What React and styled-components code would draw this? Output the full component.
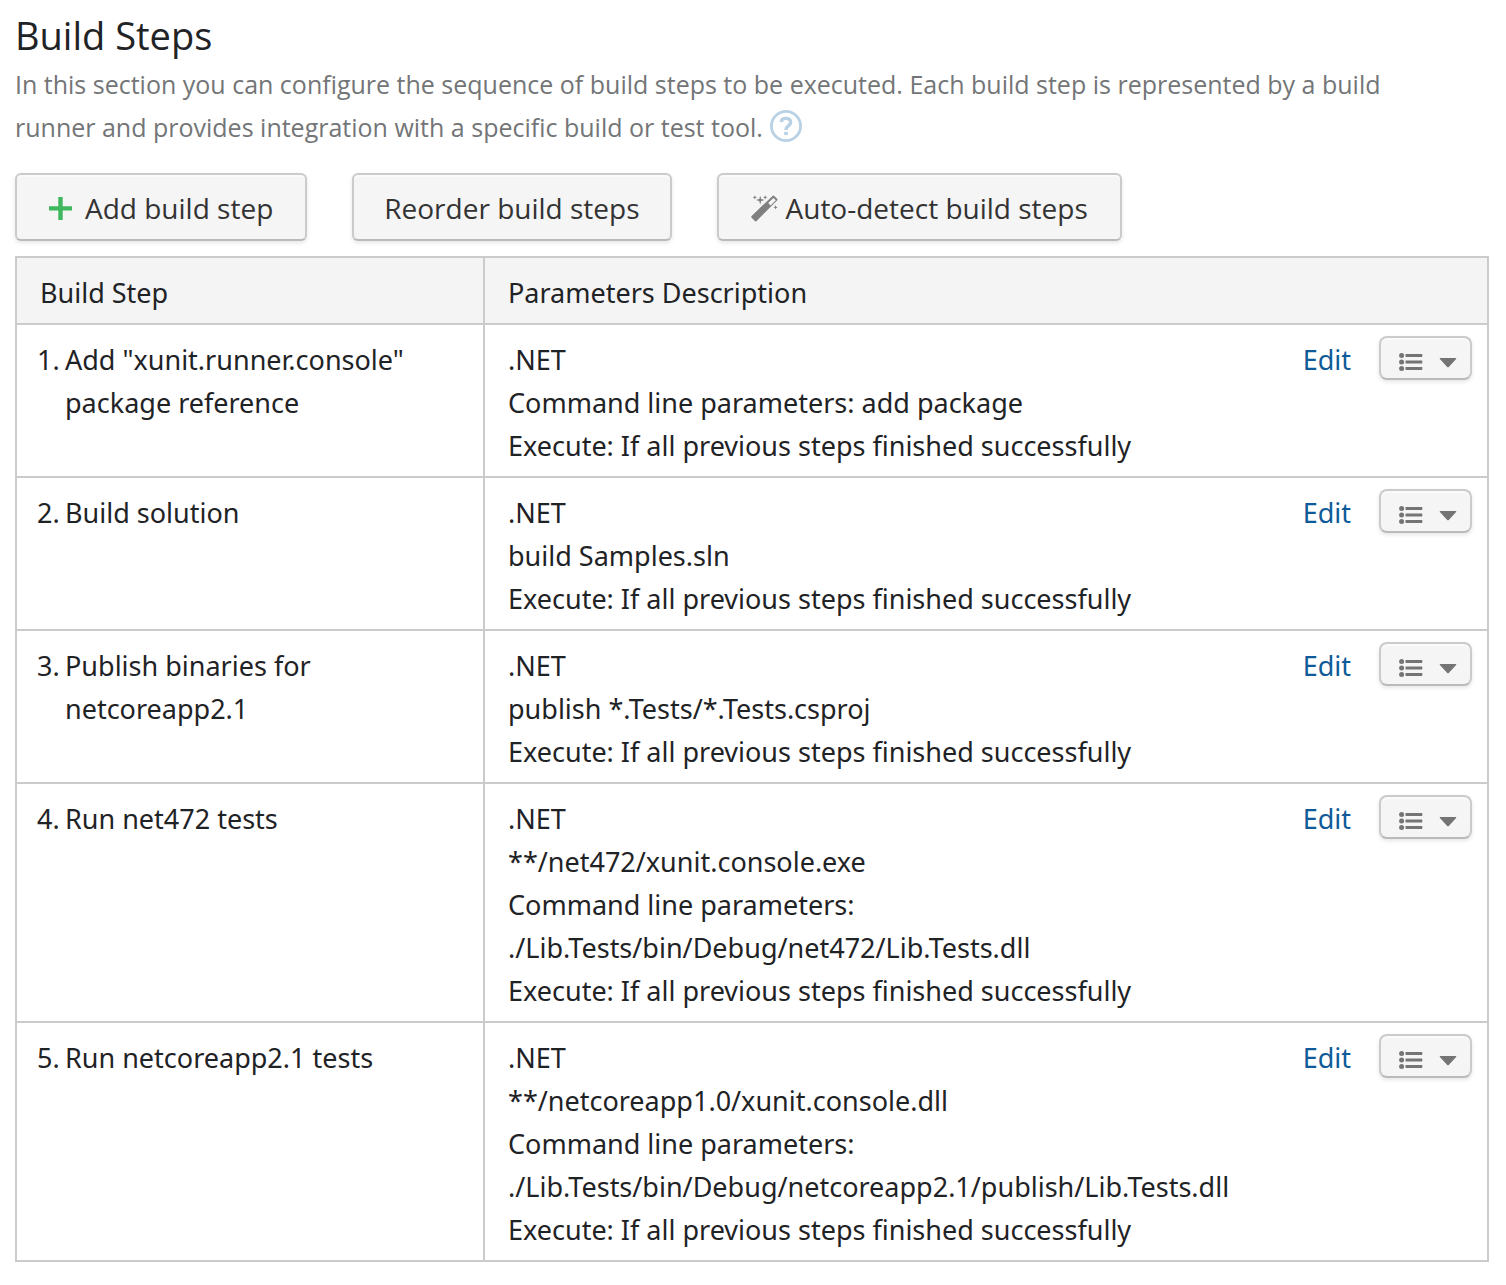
import React from "react";
import styled, { createGlobalStyle } from "styled-components";

const GlobalStyle = createGlobalStyle`
  * { box-sizing: border-box; }
  body {
    margin: 0;
    background: #fff;
    color: #1f2326;
    font-family: "Noto Sans", "Open Sans", sans-serif;
    font-size: 27px;
    line-height: 43px;
  }
`;

const Page = styled.main`
  padding: 8px 17px 22px 15px;
`;

const Title = styled.h1`
  margin: 0 0 1px;
  font-family: "Open Sans", "Noto Sans", sans-serif;
  font-size: 38px;
  font-weight: 400;
  line-height: 54px;
`;

const Intro = styled.p`
  margin: 0;
  padding-right: 48px;
  color: #737577;
  font-family: "Open Sans", "Noto Sans", sans-serif;
  font-size: 25px;
`;

const HelpLink = styled.a`
  display: inline-block;
  height: 32px;
  margin-left: 1px;
  line-height: 0;
  vertical-align: -5px;
`;

const Toolbar = styled.div`
  display: flex;
  gap: 45px;
  margin: 24px 0 15px;
`;

const Button = styled.button`
  display: inline-flex;
  align-items: center;
  justify-content: center;
  gap: ${(p) => p.$gap || 0}px;
  height: 68px;
  padding: 2px ${(p) => (p.$gap ? 32 : 30)}px 0;
  border: 2px solid #cbcbcb;
  border-bottom-color: #bababa;
  border-radius: 6px;
  background: #f5f5f5;
  box-shadow: 0 2px 4px rgba(0, 0, 0, 0.1), inset 0 2px 0 #fafafa;
  color: #333;
  font: 400 28px/43px "Open Sans", "Noto Sans", sans-serif;
  white-space: nowrap;
  cursor: pointer;
`;

const MenuButton = styled(Button)`
  height: 44px;
  padding: 8px 13px 0 18px;
  border-radius: 8px;
`;

const Table = styled.table`
  width: 100%;
  border: 2px solid #cbcbcb;
  border-collapse: collapse;
  table-layout: fixed;
`;

const NameCol = styled.col`
  width: 468px;
`;

const ActionsCol = styled.col`
  width: 210px;
`;

const HeadCell = styled.th`
  padding: 13px 23px 9px;
  border: 2px solid #cbcbcb;
  background: #f4f4f4;
  font-weight: 400;
  text-align: left;
`;

const Row = styled.tr`
  border-top: 2px solid #cbcbcb;
`;

const NameCell = styled.td`
  padding: 13px 20px 9px;
  border-right: 2px solid #cbcbcb;
  vertical-align: top;
`;

const StepName = styled.div`
  display: grid;
  grid-template-columns: 28px 1fr;
`;

const ParamsCell = styled.td`
  padding: 13px 0 9px 23px;
  vertical-align: top;
`;

const ActionsCell = styled.td`
  padding: 11px 15px 0 0;
  vertical-align: top;
`;

const Actions = styled.div`
  display: flex;
  justify-content: flex-end;
  align-items: flex-start;
  gap: 28px;
`;

const EditLink = styled.a`
  padding-top: 2px;
  color: #0f5b99;
  text-decoration: none;
`;

const steps = [
  { name: 'Add "xunit.runner.console" package reference', params: ["Command line parameters: add package"] },
  { name: "Build solution", params: ["build Samples.sln"] },
  { name: "Publish binaries for netcoreapp2.1", params: ["publish *.Tests/*.Tests.csproj"] },
  {
    name: "Run net472 tests",
    params: ["**/net472/xunit.console.exe", "Command line parameters:", "./Lib.Tests/bin/Debug/net472/Lib.Tests.dll"],
  },
  {
    name: "Run netcoreapp2.1 tests",
    params: [
      "**/netcoreapp1.0/xunit.console.dll",
      "Command line parameters:",
      "./Lib.Tests/bin/Debug/netcoreapp2.1/publish/Lib.Tests.dll",
    ],
  },
];

const HelpIcon = () => (
  <svg width="32" height="32" viewBox="0 0 32 32" fill="none" stroke="#b8d1e5" aria-hidden="true">
    <circle cx="16" cy="16" r="14.6" strokeWidth="2.8" />
    <path d="M11.200 12.200C11.400 9.800 13.300 8.400 16 8.400c2.800 0 4.700 1.500 4.700 3.800 0 3.500-4.700 3.700-4.700 7.200v.6" strokeWidth="3.400" />
    <path d="M14.200 21.800h3.700v3.300h-3.700z" fill="#b8d1e5" stroke="none" />
  </svg>
);

const PlusIcon = () => (
  <svg width="23" height="23" viewBox="0 0 23 23" fill="#3fb75f" aria-hidden="true">
    <path d="M9.300 0h4.400v9.200H23v4.400h-9.300V23H9.300v-9.400H0V9.200h9.300z" />
  </svg>
);

const WandIcon = () => (
  <svg width="27" height="27" viewBox="0 0 27 27" fill="#808080" aria-hidden="true">
    <path
      fillRule="evenodd"
      d="M21.5.9a1.2 1.2 0 0 1 1.7 0l2.9 2.9a1.2 1.2 0 0 1 0 1.7L5.6 26a1.2 1.2 0 0 1-1.7 0L.6 22.7a1.2 1.2 0 0 1 0-1.7zM22.400 2.900l-5.200 5.200 2.400 2.400 5.200-5.200z"
    />
    <path d="M9.200.8l1 3.200 3.400 1-3.400 1-1 3.400-1-3.400-3.300-1 3.300-1zM3.800.2l.6 1.500 1.700.6-1.700.6-.6 1.700-.6-1.700-1.600-.6 1.600-.6zM14.200.2l.6 1.500 1.700.6-1.700.6-.6 1.700-.6-1.700-1.600-.6 1.600-.6zM24.600 10l.6 1.700 1.600.6-1.600.6-.6 1.600-.6-1.600-1.700-.6 1.700-.6z" />
  </svg>
);

const ListIcon = () => (
  <svg width="24" height="18" viewBox="0 0 24 18" fill="#747474" aria-hidden="true">
    {[2.5, 9, 15.5].map((y) => (
      <g key={y}>
        <circle cx="2.6" cy={y} r="2.5" />
        <rect x="6.5" y={y - 1.5} width="16.8" height="3" rx=".4" />
      </g>
    ))}
  </svg>
);

const CaretIcon = () => (
  <svg width="18" height="18" viewBox="0 0 18 18" fill="#747474" aria-hidden="true">
    <path d="M1.300 5h15.400q1.100 0 .4.900l-7.300 8q-.8.800-1.600 0l-7.300-8q-.7-.9.400-.9z" />
  </svg>
);

export default function App() {
  return (
    <>
      <GlobalStyle />
      <Page>
        <Title>Build Steps</Title>
        <Intro>
          In this section you can configure the sequence of build steps to be executed. Each build step is represented
          by a build runner and provides integration with a specific build or test tool.{" "}
          <HelpLink href="#help" aria-label="Help">
            <HelpIcon />
          </HelpLink>
        </Intro>
        <Toolbar>
          <Button type="button" $gap={13}>
            <PlusIcon />
            Add build step
          </Button>
          <Button type="button">Reorder build steps</Button>
          <Button type="button" $gap={8}>
            <WandIcon />
            Auto-detect build steps
          </Button>
        </Toolbar>
        <Table>
          <colgroup>
            <NameCol />
            <col />
            <ActionsCol />
          </colgroup>
          <thead>
            <tr>
              <HeadCell scope="col">Build Step</HeadCell>
              <HeadCell scope="col" colSpan={2}>
                Parameters Description
              </HeadCell>
            </tr>
          </thead>
          <tbody>
            {steps.map((step, i) => (
              <Row key={step.name}>
                <NameCell>
                  <StepName>
                    <span>{i + 1}.</span>
                    <span>{step.name}</span>
                  </StepName>
                </NameCell>
                <ParamsCell>
                  <div>.NET</div>
                  {step.params.map((line) => (
                    <div key={line}>{line}</div>
                  ))}
                  <div>Execute: If all previous steps finished successfully</div>
                </ParamsCell>
                <ActionsCell>
                  <Actions>
                    <EditLink href={`#step-${i + 1}`}>Edit</EditLink>
                    <MenuButton type="button" $gap={16} aria-label={`Actions for ${step.name}`}>
                      <ListIcon />
                      <CaretIcon />
                    </MenuButton>
                  </Actions>
                </ActionsCell>
              </Row>
            ))}
          </tbody>
        </Table>
      </Page>
    </>
  );
}
